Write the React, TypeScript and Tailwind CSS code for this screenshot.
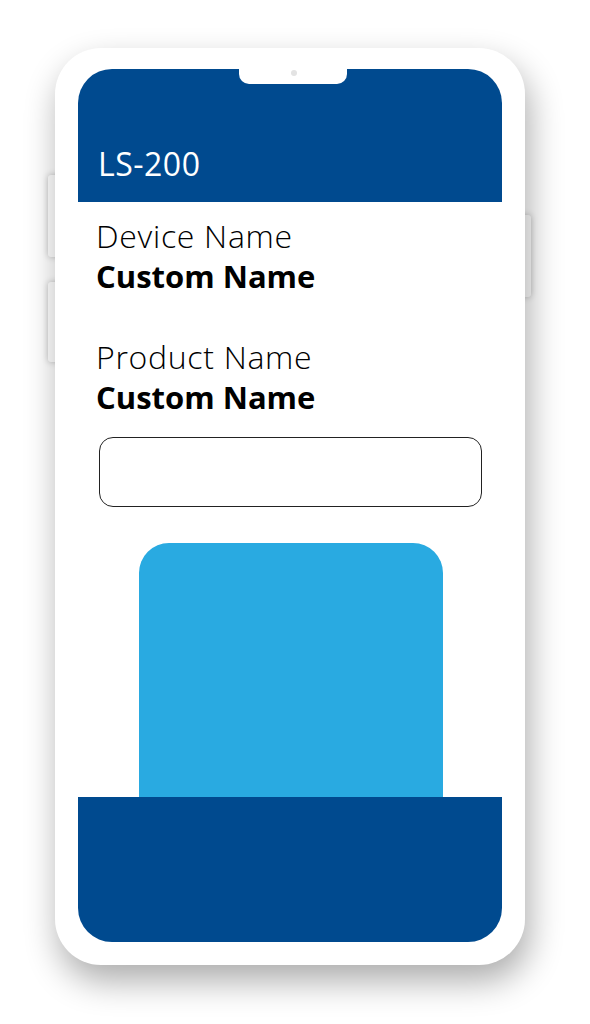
import React from 'react'

// Phone mockup showing a device detail screen

const font = { fontFamily: '"Open Sans", "Noto Sans", sans-serif' }

function SideButton({ className }: { className: string }) {
  return <div className={`absolute w-[14px] rounded-[3px] bg-white shadow-[0_0_6px_rgba(0,0,0,0.25)] ${className}`} />
}

function InfoField({ label, value }: { label: string; value: string }) {
  return (
    <div className="flex flex-col">
      <span className="text-[32px] font-light leading-[41px] tracking-[0.7px] text-black">{label}</span>
      <span className="text-[31px] font-bold leading-[41px] text-black">{value}</span>
    </div>
  )
}

export default function App() {
  return (
    <div className="h-[1024px] w-[590px] overflow-hidden bg-white" style={font}>
      <div className="relative ml-[55px] mt-[48px] h-[917px] w-[470px]">
        {/* side buttons */}
        <SideButton className="left-[-7px] top-[127px] h-[82px]" />
        <SideButton className="left-[-7px] top-[234px] h-[80px]" />
        <SideButton className="right-[-6px] top-[167px] h-[82px]" />

        {/* phone body */}
        <div className="relative flex h-full w-full flex-col rounded-[46px] bg-white px-[23px] pb-[23px] pt-[21px] shadow-[4px_16px_34px_rgba(0,0,0,0.33)]">
          {/* screen */}
          <div className="relative flex flex-1 flex-col overflow-hidden rounded-[34px] bg-white">
            {/* notch */}
            <div className="absolute left-[161px] top-0 h-[15px] w-[108px] rounded-b-[10px] bg-white">
              <div className="absolute left-[52px] top-[1px] h-[6px] w-[6px] rounded-full bg-[#e3e3e3]" />
            </div>

            <header className="flex h-[133px] items-end bg-[#004a8f] px-[20px] pb-[18px]">
              <h1 className="text-[32px] leading-[40px] tracking-[0.5px] text-white">LS-200</h1>
            </header>

            <div className="flex flex-col gap-[39px] px-[18px] pt-[13px]">
              <InfoField label="Device Name" value="Custom Name" />
              <InfoField label="Product Name" value="Custom Name" />
            </div>

            <div className="ml-[21px] mr-[20px] mt-[19px] h-[70px] rounded-[14px] border border-[#222]" />

            <div className="ml-[61px] mr-[59px] mt-[36px] h-[254px] rounded-t-[30px] bg-[#29aae1]" />

            <footer className="h-[145px] bg-[#004a8f]" />
          </div>
        </div>
      </div>
    </div>
  )
}
